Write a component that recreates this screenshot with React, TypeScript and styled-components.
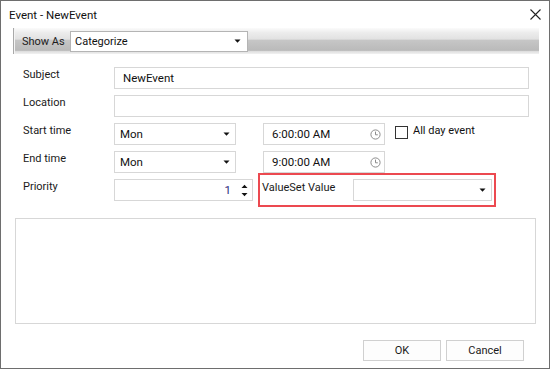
import styled, { createGlobalStyle } from "styled-components";

const GlobalStyle = createGlobalStyle`
  html, body {
    margin: 0;
    padding: 0;
    background: #ffffff;
  }
  body {
    font-family: Roboto, "Noto Sans", Arial, sans-serif;
    font-size: 11px;
    color: #111111;
  }
  * {
    box-sizing: border-box;
  }
`;

function DropArrow() {
  return (
    <svg width="7" height="4" viewBox="0 0 7 4">
      <path d="M0.5 0.5 L6.5 0.5 L3.5 3.8 Z" fill="#111" />
    </svg>
  );
}

function ClockIcon() {
  return (
    <svg width="11" height="11" viewBox="0 0 11 11">
      <circle cx="5.5" cy="5.5" r="4.6" fill="none" stroke="#8c8c8c" strokeWidth="1" />
      <path d="M5.5 2.6 V5.8 H7.8" fill="none" stroke="#8c8c8c" strokeWidth="1" />
    </svg>
  );
}

function SpinArrows() {
  return (
    <svg width="7" height="13" viewBox="0 0 7 13">
      <path d="M0.5 4 L3.5 0.8 L6.5 4 Z" fill="#111" />
      <path d="M0.5 9 L6.5 9 L3.5 12.2 Z" fill="#111" />
    </svg>
  );
}

function CloseIcon() {
  return (
    <svg width="11" height="11" viewBox="0 0 11 11">
      <path d="M0.5 0.5 L10.5 10.5 M10.5 0.5 L0.5 10.5" stroke="#222" strokeWidth="1.1" />
    </svg>
  );
}

type ComboProps = { value: string; width: number };

function Combo({ value, width }: ComboProps) {
  return (
    <ComboBox $width={width}>
      <span>{value}</span>
      <DropArrow />
    </ComboBox>
  );
}

export default function App() {
  return (
    <>
      <GlobalStyle />
      <Window>
        <TitleBar>
          <Title>Event - NewEvent</Title>
          <CloseIcon />
        </TitleBar>

        <Toolbar>
          <ShowAs>Show As</ShowAs>
          <ToolbarCombo>
            <span>Categorize</span>
            <DropArrow />
          </ToolbarCombo>
        </Toolbar>

        <Form>
          <Row>
            <Label>Subject</Label>
            <TextBox $width={415}>NewEvent</TextBox>
          </Row>
          <Row>
            <Label>Location</Label>
            <TextBox $width={415} />
          </Row>
          <Row>
            <Label>Start time</Label>
            <Combo value="Mon" width={122} />
            <TimeBox>
              <span>6:00:00 AM</span>
              <ClockIcon />
            </TimeBox>
            <CheckGroup>
              <CheckBox />
              <span>All day event</span>
            </CheckGroup>
          </Row>
          <Row>
            <Label>End time</Label>
            <Combo value="Mon" width={122} />
            <TimeBox>
              <span>9:00:00 AM</span>
              <ClockIcon />
            </TimeBox>
          </Row>
          <Row>
            <Label>Priority</Label>
            <SpinBox>
              <SpinValue>1</SpinValue>
              <SpinArrows />
            </SpinBox>
            <Highlight>
              <HighlightLabel>ValueSet Value</HighlightLabel>
              <Combo value="" width={139} />
            </Highlight>
          </Row>
        </Form>

        <Notes />

        <Footer>
          <Button>OK</Button>
          <Button>Cancel</Button>
        </Footer>
      </Window>
    </>
  );
}

const Window = styled.div`
  width: 550px;
  height: 369px;
  border: 1px solid #6e6e6e;
  background: #ffffff;
  display: flex;
  flex-direction: column;
`;

const TitleBar = styled.div`
  height: 27px;
  padding: 0 8px 0 8px;
  display: flex;
  align-items: center;
  justify-content: space-between;
`;

const Title = styled.div`
  font-size: 11.5px;
  color: #111;
`;

const Toolbar = styled.div`
  height: 26px;
  margin: 0 10px 0 12px;
  display: flex;
  align-items: center;
  background: linear-gradient(
    to bottom,
    #fbfbfb 0%,
    #ececec 18%,
    #e2e2e2 42%,
    #c6c6c6 48%,
    #bababa 86%,
    #dedede 90%,
    #f2f2f2 100%
  );
`;

const ShowAs = styled.div`
  width: 57px;
  height: 100%;
  padding-left: 8px;
  display: flex;
  align-items: center;
  border-left: 1px solid #a9a9a9;
  box-shadow: inset 1px 0 0 #f4f4f4;
  color: #1c1c1c;
`;

const ToolbarCombo = styled.div`
  width: 178px;
  height: 21px;
  padding: 0 6px 0 4px;
  display: flex;
  align-items: center;
  justify-content: space-between;
  background: #ffffff;
  border: 1px solid #b4b4b4;
`;

const Form = styled.div`
  padding: 13px 0 0 22px;
  display: flex;
  flex-direction: column;
  gap: 6px;
`;

const Row = styled.div`
  height: 22px;
  display: flex;
  align-items: center;
`;

const Label = styled.div`
  width: 91px;
  flex-shrink: 0;
  align-self: flex-start;
  padding-top: 1px;
  line-height: 14px;
  color: #1a1a1a;
`;

const TextBox = styled.div<{ $width: number }>`
  width: ${(p) => p.$width}px;
  height: 22px;
  padding: 0 8px;
  display: flex;
  align-items: center;
  border: 1px solid #d7d7d7;
  font-size: 11.5px;
`;

const ComboBox = styled.div<{ $width: number }>`
  width: ${(p) => p.$width}px;
  height: 22px;
  padding: 0 5px 0 5px;
  display: flex;
  align-items: center;
  justify-content: space-between;
  border: 1px solid #d7d7d7;
  background: #ffffff;
  font-size: 11.5px;
`;

const TimeBox = styled.div`
  width: 122px;
  height: 22px;
  margin-left: 27px;
  padding: 0 3px 0 8px;
  display: flex;
  align-items: center;
  justify-content: space-between;
  border: 1px solid #d7d7d7;
  font-size: 11.5px;
`;

const CheckGroup = styled.div`
  align-self: flex-start;
  margin: 2px 0 0 10px;
  display: flex;
  align-items: flex-start;
  gap: 5px;
  line-height: 12px;
`;

const CheckBox = styled.div`
  width: 13px;
  height: 13px;
  margin-top: 1px;
  border: 1px solid #333333;
  background: #ffffff;
`;

const SpinBox = styled.div`
  width: 139px;
  height: 22px;
  padding: 0 4px 0 8px;
  display: flex;
  align-items: center;
  justify-content: flex-end;
  gap: 10px;
  border: 1px solid #d7d7d7;
`;

const SpinValue = styled.span`
  color: #2b2b7e;
  font-size: 11.5px;
`;

const Highlight = styled.div`
  width: 238px;
  height: 34px;
  margin-left: 5px;
  padding: 0 2px 0 2px;
  display: flex;
  align-items: center;
  border: 2px solid #ec4950;
`;

const HighlightLabel = styled.div`
  width: 91px;
  flex-shrink: 0;
  margin-top: -5px;
  color: #1a1a1a;
`;

const Notes = styled.div`
  height: 106px;
  margin: 17px 13px 0 14px;
  border: 1px solid #d7d7d7;
`;

const Footer = styled.div`
  margin-top: 16px;
  padding-right: 25px;
  display: flex;
  justify-content: flex-end;
  gap: 5px;
`;

const Button = styled.div`
  width: 78px;
  height: 21px;
  display: flex;
  align-items: center;
  justify-content: center;
  border: 1px solid #d0d0d0;
  background: #fdfdfd;
  color: #1a1a1a;
`;
